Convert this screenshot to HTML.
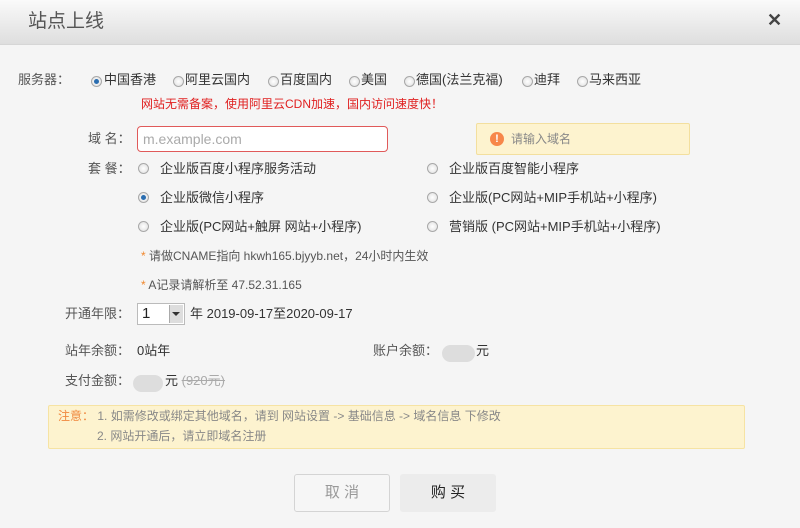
<!DOCTYPE html>
<html><head><meta charset="utf-8"><style>
*{margin:0;padding:0;box-sizing:border-box}
body{width:800px;height:528px;background:#f5f5f5;font-family:"Liberation Sans","Noto Sans CJK SC",sans-serif;font-size:13px;color:#333;position:relative;overflow:hidden}
.a{position:absolute;white-space:nowrap;line-height:16px}
.hd{position:absolute;left:0;top:0;width:800px;height:45px;background:linear-gradient(#fafafa,#dedede);border-bottom:1px solid #d6d6d6}
.r{position:absolute;width:11px;height:11px;border-radius:50%;border:1px solid #a8a8a8;background:radial-gradient(#fff,#ddd)}
.r.on::after{content:"";position:absolute;left:2px;top:2px;width:5px;height:5px;border-radius:50%;background:#2a6db0}
.g{color:#555}
.pill{position:absolute;height:17px;border-radius:9px;background:#ddd}
</style></head><body>
<div class="hd"></div>
<div class="a" style="left:28px;top:11px;font-size:19px;line-height:22px;color:#555">站点上线</div>
<div class="a" style="left:767px;top:12px;font-size:18px;font-weight:bold;color:#444">✕</div>

<div class="a g" style="left:18px;top:72px">服务器：</div>
<div class="r on" style="left:91px;top:76px"></div><div class="a" style="left:104px;top:72px">中国香港</div>
<div class="r" style="left:173px;top:76px"></div><div class="a" style="left:185px;top:72px">阿里云国内</div>
<div class="r" style="left:268px;top:76px"></div><div class="a" style="left:280px;top:72px">百度国内</div>
<div class="r" style="left:349px;top:76px"></div><div class="a" style="left:361px;top:72px">美国</div>
<div class="r" style="left:404px;top:76px"></div><div class="a" style="left:416px;top:72px">德国(法兰克福)</div>
<div class="r" style="left:522px;top:76px"></div><div class="a" style="left:534px;top:72px">迪拜</div>
<div class="r" style="left:577px;top:76px"></div><div class="a" style="left:589px;top:72px">马来西亚</div>
<div class="a" style="left:141px;top:96px;font-size:12px;color:#e02020">网站无需备案，使用阿里云CDN加速，国内访问速度快！</div>

<div class="a g" style="left:88px;top:131px">域 名：</div>
<div style="position:absolute;left:137px;top:126px;width:251px;height:26px;border:1px solid #e05a5a;border-radius:4px;background:#fff"></div>
<div class="a" style="left:143px;top:131px;font-size:14px;color:#aaa">m.example.com</div>
<div style="position:absolute;left:476px;top:123px;width:214px;height:32px;background:#fdf3cf;border:1px solid #f3df9e;border-radius:2px"></div>
<div style="position:absolute;left:490px;top:132px;width:14px;height:14px;border-radius:50%;background:#f7874a;color:#fff;font-size:11px;font-weight:bold;text-align:center;line-height:14px">!</div>
<div class="a" style="left:511px;top:131px;font-size:12px;color:#888">请输入域名</div>

<div class="a g" style="left:88px;top:161px">套 餐：</div>
<div class="r" style="left:138px;top:163px"></div><div class="a" style="left:160px;top:161px">企业版百度小程序服务活动</div>
<div class="r on" style="left:138px;top:192px"></div><div class="a" style="left:160px;top:190px">企业版微信小程序</div>
<div class="r" style="left:138px;top:221px"></div><div class="a" style="left:160px;top:219px">企业版(PC网站+触屏 网站+小程序)</div>
<div class="r" style="left:427px;top:163px"></div><div class="a" style="left:449px;top:161px">企业版百度智能小程序</div>
<div class="r" style="left:427px;top:192px"></div><div class="a" style="left:449px;top:190px">企业版(PC网站+MIP手机站+小程序)</div>
<div class="r" style="left:427px;top:221px"></div><div class="a" style="left:449px;top:219px">营销版 (PC网站+MIP手机站+小程序)</div>
<div class="a" style="left:141px;top:248px;font-size:12px;color:#555"><span style="color:#f0882e">*</span> 请做CNAME指向 hkwh165.bjyyb.net，24小时内生效</div>
<div class="a" style="left:141px;top:277px;font-size:12px;color:#555"><span style="color:#f0882e">*</span> A记录请解析至 47.52.31.165</div>

<div class="a g" style="left:65px;top:306px">开通年限：</div>
<div style="position:absolute;left:137px;top:303px;width:48px;height:22px;border:1px solid #bbb;background:#fff"></div>
<div class="a" style="left:142px;top:306px;font-size:15px;color:#222">1</div>
<div style="position:absolute;left:169px;top:305px;width:14px;height:18px;background:#ddd;border-left:1px solid #aaa"></div>
<div style="position:absolute;left:172px;top:312px;border-left:4px solid transparent;border-right:4px solid transparent;border-top:4px solid #333"></div>
<div class="a" style="left:190px;top:306px">年 2019-09-17至2020-09-17</div>

<div class="a g" style="left:65px;top:343px">站年余额：</div>
<div class="a" style="left:137px;top:343px">0站年</div>
<div class="a g" style="left:373px;top:343px">账户余额：</div>
<div class="pill" style="left:442px;top:345px;width:33px"></div>
<div class="a" style="left:476px;top:343px">元</div>
<div class="a g" style="left:65px;top:373px">支付金额：</div>
<div class="pill" style="left:133px;top:375px;width:30px"></div>
<div class="a" style="left:165px;top:373px">元 <span style="color:#aaa;text-decoration:line-through">(920元)</span></div>

<div style="position:absolute;left:48px;top:405px;width:697px;height:44px;background:#fdf3cf;border:1px solid #f6e3a3;border-radius:2px"></div>
<div class="a" style="left:58px;top:408px;font-size:12px;color:#888"><span style="color:#f0883e">注意：</span> 1. 如需修改或绑定其他域名，请到 网站设置 -&gt; 基础信息 -&gt; 域名信息 下修改</div>
<div class="a" style="left:97px;top:428px;font-size:12px;color:#888">2. 网站开通后，请立即域名注册</div>

<div style="position:absolute;left:294px;top:474px;width:96px;height:38px;border:1px solid #d4d4d4;border-radius:3px;background:#f6f6f6;color:#999;font-size:15px;text-align:center;line-height:36px">取 消</div>
<div style="position:absolute;left:400px;top:474px;width:96px;height:38px;border-radius:3px;background:#ececec;color:#222;font-size:15px;text-align:center;line-height:38px">购 买</div>
</body></html>
